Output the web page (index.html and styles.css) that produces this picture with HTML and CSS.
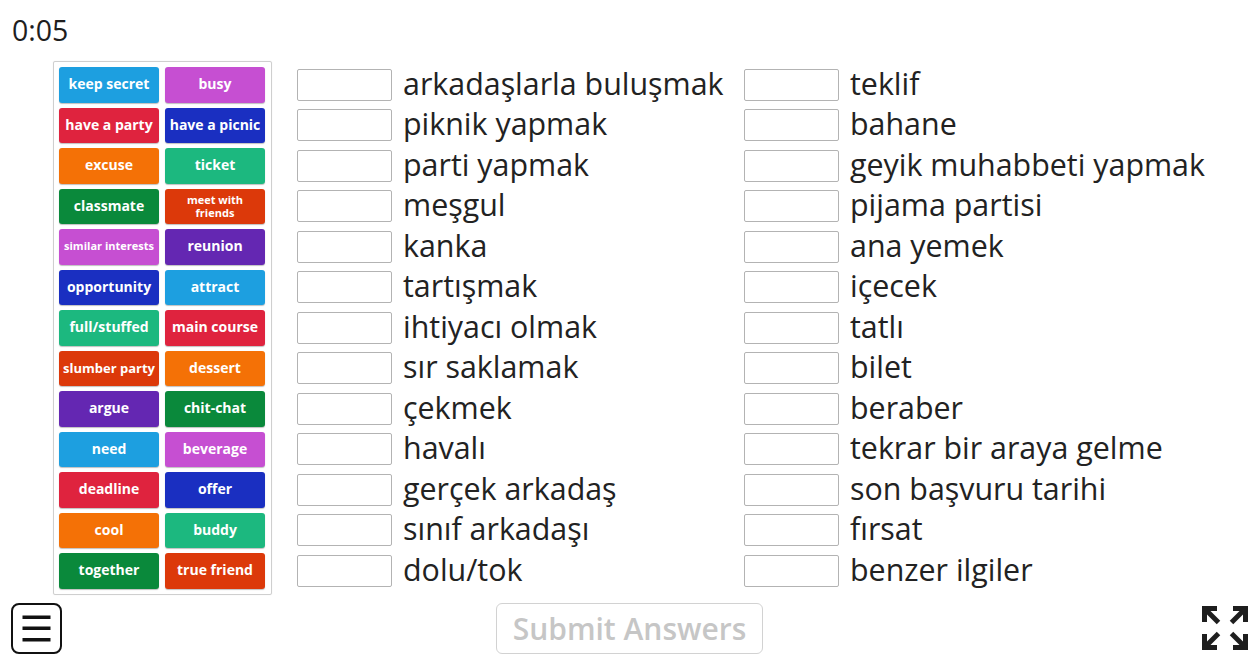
FILE: index.html
```html
<!DOCTYPE html>
<html lang="tr">
<head>
<meta charset="utf-8">
<title>Match up</title>
<link rel="stylesheet" href="styles.css">
</head>
<body>
<div class="page">
  <div class="timer">0:05</div>
  <div class="main">
    <div class="bank">
      <div class="tile c-sky">keep secret</div>
      <div class="tile c-mag">busy</div>
      <div class="tile c-red">have a party</div>
      <div class="tile c-navy">have a picnic</div>
      <div class="tile c-org">excuse</div>
      <div class="tile c-grn">ticket</div>
      <div class="tile c-dgrn">classmate</div>
      <div class="tile c-ored tiny two">meet with<br>friends</div>
      <div class="tile c-mag tiny">similar interests</div>
      <div class="tile c-pur">reunion</div>
      <div class="tile c-navy">opportunity</div>
      <div class="tile c-sky">attract</div>
      <div class="tile c-grn">full/stuffed</div>
      <div class="tile c-red">main course</div>
      <div class="tile c-ored small">slumber party</div>
      <div class="tile c-org">dessert</div>
      <div class="tile c-pur">argue</div>
      <div class="tile c-dgrn">chit-chat</div>
      <div class="tile c-sky">need</div>
      <div class="tile c-mag">beverage</div>
      <div class="tile c-red">deadline</div>
      <div class="tile c-navy">offer</div>
      <div class="tile c-org">cool</div>
      <div class="tile c-grn">buddy</div>
      <div class="tile c-dgrn">together</div>
      <div class="tile c-ored">true friend</div>
    </div>
    <div class="targets">
      <div class="col">
        <div class="row"><span class="slot"></span><span class="label">arkadaşlarla buluşmak</span></div>
        <div class="row"><span class="slot"></span><span class="label">piknik yapmak</span></div>
        <div class="row"><span class="slot"></span><span class="label">parti yapmak</span></div>
        <div class="row"><span class="slot"></span><span class="label">meşgul</span></div>
        <div class="row"><span class="slot"></span><span class="label">kanka</span></div>
        <div class="row"><span class="slot"></span><span class="label">tartışmak</span></div>
        <div class="row"><span class="slot"></span><span class="label">ihtiyacı olmak</span></div>
        <div class="row"><span class="slot"></span><span class="label">sır saklamak</span></div>
        <div class="row"><span class="slot"></span><span class="label">çekmek</span></div>
        <div class="row"><span class="slot"></span><span class="label">havalı</span></div>
        <div class="row"><span class="slot"></span><span class="label">gerçek arkadaş</span></div>
        <div class="row"><span class="slot"></span><span class="label">sınıf arkadaşı</span></div>
        <div class="row"><span class="slot"></span><span class="label">dolu/tok</span></div>
      </div>
      <div class="col">
        <div class="row"><span class="slot"></span><span class="label">teklif</span></div>
        <div class="row"><span class="slot"></span><span class="label">bahane</span></div>
        <div class="row"><span class="slot"></span><span class="label">geyik muhabbeti yapmak</span></div>
        <div class="row"><span class="slot"></span><span class="label">pijama partisi</span></div>
        <div class="row"><span class="slot"></span><span class="label">ana yemek</span></div>
        <div class="row"><span class="slot"></span><span class="label">içecek</span></div>
        <div class="row"><span class="slot"></span><span class="label">tatlı</span></div>
        <div class="row"><span class="slot"></span><span class="label">bilet</span></div>
        <div class="row"><span class="slot"></span><span class="label">beraber</span></div>
        <div class="row"><span class="slot"></span><span class="label">tekrar bir araya gelme</span></div>
        <div class="row"><span class="slot"></span><span class="label">son başvuru tarihi</span></div>
        <div class="row"><span class="slot"></span><span class="label">fırsat</span></div>
        <div class="row"><span class="slot"></span><span class="label">benzer ilgiler</span></div>
      </div>
    </div>
  </div>
  <div class="bottom">
    <div class="menu-btn">
      <svg width="51" height="51" viewBox="0 0 51 51">
        <rect x="1" y="1" width="49" height="49" rx="7" ry="7" fill="none" stroke="#111" stroke-width="2"/>
        <rect x="11.5" y="12.5" width="28" height="3.5" fill="#111"/>
        <rect x="11.5" y="23.5" width="28" height="3.5" fill="#111"/>
        <rect x="11.5" y="35" width="28" height="3.5" fill="#111"/>
      </svg>
    </div>
    <div class="submit">Submit Answers</div>
    <div class="fs-btn">
      <svg width="46" height="44" viewBox="0 0 46 44">
        <g fill="none" stroke="#1e1e1e" stroke-width="5">
          <path d="M2.5 16 V2.5 H15"/>
          <path d="M3 3 L16.5 16.5"/>
          <path d="M31 2.5 H43.5 V16"/>
          <path d="M43 3 L29.5 16.5"/>
          <path d="M2.5 28 V41.5 H15"/>
          <path d="M3 41 L16.5 27.5"/>
          <path d="M31 41.5 H43.5 V28"/>
          <path d="M43 41 L29.5 27.5"/>
        </g>
      </svg>
    </div>
  </div>
</div>
</body>
</html>
```

FILE: styles.css
```css
* { box-sizing: border-box; }
html, body { margin: 0; padding: 0; background: #fff; }
body {
  font-family: "Open Sans", "Noto Sans", sans-serif;
  color: #222;
  width: 1259px;
  height: 655px;
  overflow: hidden;
}
.page {
  display: flex;
  flex-direction: column;
  height: 655px;
}
.timer {
  font-size: 28.5px;
  line-height: 36px;
  padding: 12px 0 0 12px;
  height: 61px;
  color: #1e1e1e;
}
.main {
  display: flex;
  align-items: flex-start;
  padding-left: 53px;
  gap: 25px;
}
.bank {
  width: 219px;
  border: 1px solid #cfcfcf;
  border-radius: 2px;
  padding: 5px;
  display: grid;
  grid-template-columns: 100px 100px;
  grid-auto-rows: 35.5px;
  column-gap: 6px;
  row-gap: 5px;
  box-shadow: 0 0 1px rgba(0,0,0,0.15);
}
.tile {
  border-radius: 3px;
  color: #fff;
  font-weight: 700;
  font-size: 14px;
  display: flex;
  align-items: center;
  justify-content: center;
  text-align: center;
  white-space: nowrap;
  box-shadow: 0 1px 1px rgba(0,0,0,0.25);
  line-height: 18px;
  padding-bottom: 1px;
}
.tile.small { font-size: 13px; }
.tile.tiny { font-size: 11px; }
.tile.two { line-height: 13px; }
.c-sky { background: #1d9fe0; }
.c-mag { background: #c64fd2; }
.c-red { background: #df233e; }
.c-navy { background: #1a2fc1; }
.c-org { background: #f47106; }
.c-grn { background: #1cb87f; }
.c-dgrn { background: #0a893b; }
.c-ored { background: #dc390a; }
.c-pur { background: #6427b2; }

.targets {
  display: grid;
  grid-template-columns: 447px auto;
  margin-top: 6px;
}
.col {
  display: flex;
  flex-direction: column;
  gap: 5px;
}
.row {
  height: 35.5px;
  display: flex;
  align-items: center;
}
.slot {
  width: 95px;
  height: 32px;
  border: 1px solid #b3b3b3;
  border-radius: 2px;
  background: #fff;
  flex: none;
}
.label {
  margin-left: 11px;
  font-size: 30.4px;
  line-height: 36px;
  color: #222;
  white-space: nowrap;
  margin-top: -2px;
}
.bottom {
  display: grid;
  grid-template-columns: 1fr auto 1fr;
  align-items: center;
  margin-top: 8px;
  padding: 0 11px;
  height: 51px;
}
.menu-btn { display: flex; justify-self: start; }
.menu-btn svg { display: block; }
.submit {
  width: 267px;
  height: 51px;
  border: 1.5px solid #d2d2d2;
  border-radius: 6px;
  color: #c6c6c6;
  font-size: 30px;
  font-weight: 600;
  display: flex;
  align-items: center;
  justify-content: center;
}
.fs-btn { justify-self: end; display: flex; }
.fs-btn svg { display: block; }
```
